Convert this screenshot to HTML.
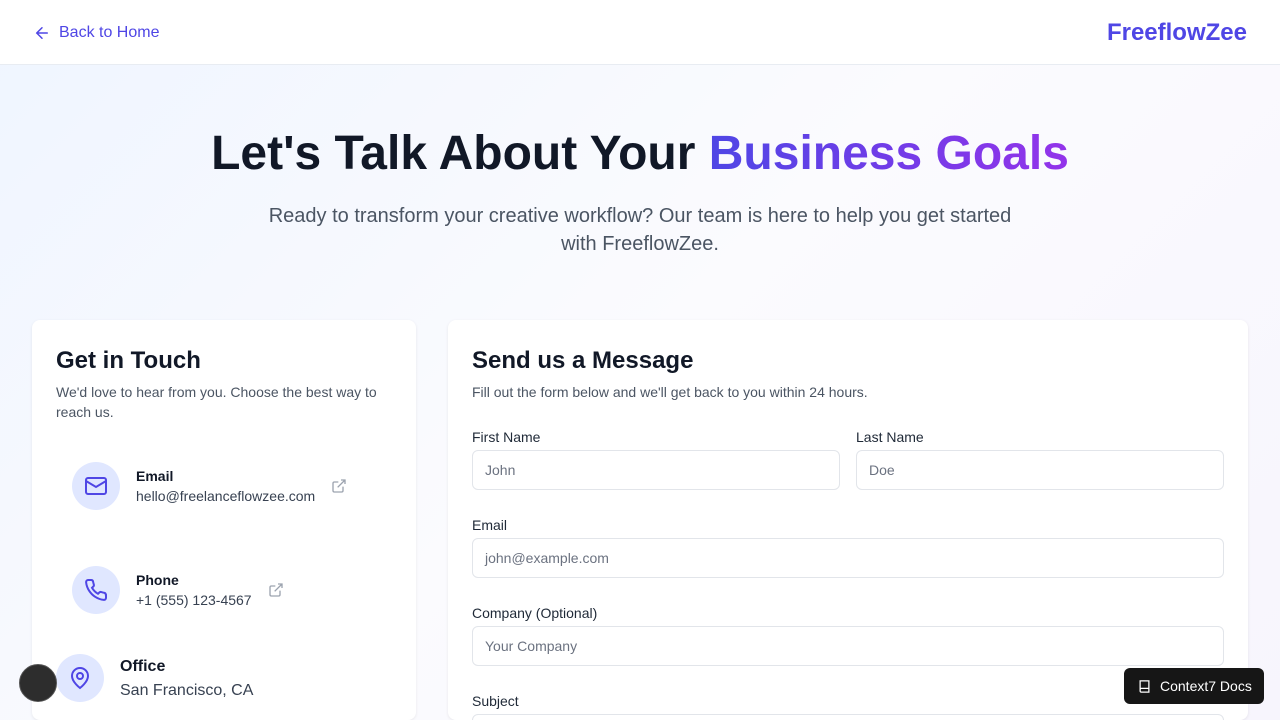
<!DOCTYPE html>
<html style="overflow:hidden;height:720px"><head><style>
*{box-sizing:border-box;margin:0;padding:0}
body{width:1280px;height:720px;overflow:hidden;font-family:"Liberation Sans",sans-serif;background:linear-gradient(135deg,#eff5ff,#fbfbfe 50%,#f7f5fd);position:relative}
.hdr{height:65px;background:#fff;border-bottom:1px solid #e8ecf2;position:relative}
.back{position:absolute;left:33px;top:24px;color:#4f46e5;font-size:16px;display:flex;align-items:center;gap:8px}
.logo{position:absolute;right:33px;top:19px;color:#4f46e5;font-size:24px;font-weight:bold}
h1{position:absolute;top:126px;width:100%;text-align:center;font-size:48px;font-weight:bold;color:#111827;letter-spacing:0}
h1 span{background:linear-gradient(90deg,#4f46e5,#9333ea);-webkit-background-clip:text;color:transparent}
.sub{position:absolute;top:202px;left:260px;width:760px;text-align:center;font-size:20px;line-height:28px;color:#4b5563}
.card{position:absolute;background:#fff;border-radius:8px;box-shadow:0 1px 3px rgba(0,0,0,.08);top:320px;height:400px}
h2{font-size:24px;font-weight:bold;color:#111827;position:absolute;top:27px;left:24px}
.desc{position:absolute;top:62px;left:24px;font-size:14px;line-height:20px;color:#4b5563}
.ic{position:absolute;width:48px;height:48px;border-radius:50%;background:#e0e7ff;display:flex;align-items:center;justify-content:center}
.t{position:absolute;font-size:14px;font-weight:bold;color:#111827}
.v{position:absolute;font-size:14px;color:#374151}
.lbl{position:absolute;font-size:14px;color:#1f2937}
.inp{position:absolute;height:40px;border:1px solid #e2e5ea;border-radius:6px;font-size:14px;color:#6b7280;padding:11px 12px;background:#fff}
</style></head><body>
<div class="hdr"><div class="back"><svg width="18" height="18" viewBox="0 0 24 24" fill="none" stroke="#4f46e5" stroke-width="2" stroke-linecap="round"><path d="M19 12H5M12 19l-7-7 7-7"/></svg>Back to Home</div><div class="logo">FreeflowZee</div></div>
<h1>Let's Talk About Your <span>Business Goals</span></h1>
<div class="sub">Ready to transform your creative workflow? Our team is here to help you get started with FreeflowZee.</div>
<div class="card" style="left:32px;width:384px">
<h2>Get in Touch</h2>
<div class="desc">We'd love to hear from you. Choose the best way to<br>reach us.</div>
<div class="ic" style="left:40px;top:142px"><svg width="24" height="24" viewBox="0 0 24 24" fill="none" stroke="#4f46e5" stroke-width="2"><rect x="2" y="4" width="20" height="16" rx="2"/><path d="M22 7l-10 6L2 7"/></svg></div>
<div class="t" style="left:104px;top:148px">Email</div><div class="v" style="left:104px;top:168px">hello@freelanceflowzee.com</div>
<svg style="position:absolute;left:299px;top:158px" width="16" height="16" viewBox="0 0 24 24" fill="none" stroke="#9ca3af" stroke-width="2"><path d="M15 3h6v6M10 14L21 3M18 13v6a2 2 0 0 1-2 2H5a2 2 0 0 1-2-2V8a2 2 0 0 1 2-2h6"/></svg>
<div class="ic" style="left:40px;top:246px"><svg width="24" height="24" viewBox="0 0 24 24" fill="none" stroke="#4f46e5" stroke-width="2"><path d="M22 16.9v3a2 2 0 0 1-2.2 2 19.8 19.8 0 0 1-8.6-3.1 19.5 19.5 0 0 1-6-6A19.8 19.8 0 0 1 2.1 4.2 2 2 0 0 1 4.1 2h3a2 2 0 0 1 2 1.7c.1.9.4 1.8.7 2.7a2 2 0 0 1-.5 2.1L8 9.8a16 16 0 0 0 6 6l1.3-1.3a2 2 0 0 1 2.1-.4c.9.3 1.8.6 2.7.7a2 2 0 0 1 1.7 2z"/></svg></div>
<div class="t" style="left:104px;top:252px">Phone</div><div class="v" style="left:104px;top:272px">+1 (555) 123-4567</div>
<svg style="position:absolute;left:236px;top:262px" width="16" height="16" viewBox="0 0 24 24" fill="none" stroke="#9ca3af" stroke-width="2"><path d="M15 3h6v6M10 14L21 3M18 13v6a2 2 0 0 1-2 2H5a2 2 0 0 1-2-2V8a2 2 0 0 1 2-2h6"/></svg>
<div class="ic" style="left:24px;top:334px"><svg width="24" height="24" viewBox="0 0 24 24" fill="none" stroke="#4f46e5" stroke-width="2"><path d="M20 10c0 6-8 12-8 12s-8-6-8-12a8 8 0 0 1 16 0z"/><circle cx="12" cy="10" r="3"/></svg></div>
<div class="t" style="left:88px;top:338px;font-size:16px">Office</div><div class="v" style="left:88px;top:362px;font-size:16px">San Francisco, CA</div>
</div>
<div class="card" style="left:448px;width:800px">
<h2>Send us a Message</h2>
<div class="desc">Fill out the form below and we'll get back to you within 24 hours.</div>
<div class="lbl" style="left:24px;top:109px">First Name</div><div class="inp" style="left:24px;top:130px;width:368px">John</div>
<div class="lbl" style="left:408px;top:109px">Last Name</div><div class="inp" style="left:408px;top:130px;width:368px">Doe</div>
<div class="lbl" style="left:24px;top:197px">Email</div><div class="inp" style="left:24px;top:218px;width:752px">john@example.com</div>
<div class="lbl" style="left:24px;top:285px">Company (Optional)</div><div class="inp" style="left:24px;top:306px;width:752px">Your Company</div>
<div class="lbl" style="left:24px;top:373px">Subject</div><div class="inp" style="left:24px;top:394px;width:752px"></div>
</div>
<div style="position:absolute;left:19px;top:664px;width:38px;height:38px;border-radius:50%;background:#2d2d2d;border:1px solid #555"></div>
<div style="position:absolute;left:1124px;top:668px;width:140px;height:36px;border-radius:6px;background:#161616;color:#fff;font-size:14px;display:flex;align-items:center;padding-left:13px;gap:8px"><svg width="15" height="15" viewBox="0 0 24 24" fill="none" stroke="#fff" stroke-width="2"><path d="M5 3h14v18H7a2 2 0 0 1-2-2z M5 17a2 2 0 0 1 2-2h12"/></svg>Context7 Docs</div>
</body></html>
